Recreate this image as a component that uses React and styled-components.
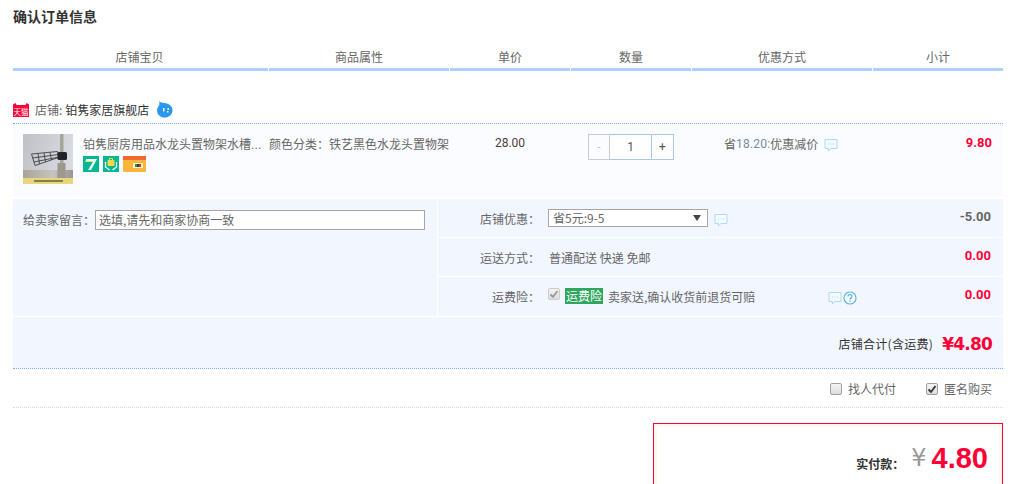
import React from 'react';
import styled, { createGlobalStyle } from 'styled-components';

const Global = createGlobalStyle`
  html, body { margin: 0; padding: 0; background: #fff; }
  body { font: 12px/16px "Noto Sans CJK SC", sans-serif; color: #666; }
  * { box-sizing: border-box; }
`;
const CJK = `"Noto Sans CJK SC", sans-serif`;
const LATIN = `Roboto, "Noto Sans CJK SC", sans-serif`;

const Page = styled.div`
  width: 1011px; height: 484px; overflow: hidden; padding: 7px 8px 0 13px;
  font-family: ${CJK};
`;
const Title = styled.h1`
  margin: 0; font-size: 14px; line-height: 18px; font-weight: 700; color: #333;
`;
const Head = styled.div`
  display: grid; grid-template-columns: 255px 180px 120px 120px 180px 130px; column-gap: 1px;
  margin-top: 15px;
`;
const HeadCell = styled.div`
  height: 31px; padding-top: 6px; line-height: 21px; text-align: center;
  color: #666; border-bottom: 3px solid #b0d0ff;
  padding-right: ${p => p.$shift || 0}px;
`;
const Shop = styled.div`
  display: flex; align-items: center; height: 53px; padding-top: 25px; color: #333;
  border-bottom: 1px dotted #78b0ff;
`;
const ShopLabel = styled.span` color: #666; margin: 0 3px 0 6px; `;
const ShopName = styled.span` color: #333; margin-right: 7px; `;
const Item = styled.div`
  display: grid; grid-template-columns: 255px 180px 120px 120px 180px 130px; column-gap: 1px;
  height: 73px; background: #fbfcff; padding-top: 10px;
`;
const Product = styled.div`
  display: flex; padding-left: 10px;
`;
const ProductInfo = styled.div`
  margin-left: 10px; width: 180px; padding-top: 1px;
`;
const ProductTitle = styled.div`
  white-space: nowrap; line-height: 18px; color: #666;
`;
const Dots = styled.span` font-family: "Liberation Sans", sans-serif; letter-spacing: .2px; `;
const Badges = styled.div` display: flex; gap: 4px; margin-top: 2px; `;
const Props = styled.div` white-space: nowrap; padding-top: 1px; line-height: 18px; color: #666; `;
const Price = styled.div`
  text-align: center; font-family: ${LATIN}; font-size: 12px; line-height: 18px; color: #4a4038;
`;
const Stepper = styled.div`
  display: flex; width: 86px; height: 26px; margin-left: 17px; background: #fff;
  border: 1px solid #a7c8e8;
`;
const StepBtn = styled.div`
  width: ${p => p.$wide ? 43 : 21}px; text-align: center; line-height: 24px; font-family: ${LATIN};
  color: ${p => p.$muted ? '#ccc' : '#555'};
  background: ${p => p.$muted ? '#fbfcff' : '#fff'};
  ${p => p.$muted && 'margin: -1px 0 -1px -1px; border: 1px solid #ccc; width: 22px; line-height: 24px;'}
  ${p => p.$wide && 'border-right: 1px solid #a7c8e8; flex: 1;'}
`;
const Promo = styled.div`
  display: flex; align-items: center; height: 18px; padding-left: 32px; color: #666; white-space: nowrap; margin-top: 1px;
`;
const PromoNum = styled.span` font-family: ${LATIN}; color: #7a8aa0; letter-spacing: .2px; `;
const Sub = styled.div`
  text-align: right; padding-right: 11px; font-family: ${LATIN}; font-weight: 700; font-size: 13px; color: #ff0036; line-height: 18px;
`;
const Extra = styled.div`
  display: grid; grid-template-columns: 424px 1fr; column-gap: 1px; margin-top: 2px;
`;
const Message = styled.div`
  background: #f2f6ff; padding: 11px 0 0 10px; display: flex; align-items: flex-start;
`;
const MessageLabel = styled.span` line-height: 20px; color: #666; `;
const MessageInput = styled.div`
  width: 330px; height: 20px; border: 1px solid #a6a6a6; background: #fff;
  padding-left: 3px; line-height: 18px; color: #666;
`;
const Rows = styled.div` display: flex; flex-direction: column; gap: 1px; `;
const Row = styled.div`
  display: grid; grid-template-columns: 102px 1fr 90px; height: ${p => p.$h}px; background: #f2f6ff; padding-top: 10px;
`;
const RowLabel = styled.div` text-align: right; line-height: 20px; color: #666; `;
const RowBody = styled.div`
  display: flex; align-items: flex-start; padding-left: 9px; line-height: 20px; color: #666; white-space: nowrap; min-width: 0;
`;
const RowValue = styled.div`
  text-align: right; padding-right: 12px; font-family: ${LATIN}; font-weight: 700; font-size: 13px; line-height: 16px;
  color: ${p => p.$red ? '#ff0036' : '#666'};
`;
const Select = styled.div`
  width: 160px; height: 18px; margin-left: -1px; border: 1px solid #a6a6a6; background: #fff; display: flex; align-items: center;
  justify-content: space-between; padding: 0 5px 0 4px; line-height: 16px;
`;
const Caret = styled.span`
  width: 0; height: 0; border: 4px solid transparent; border-top: 6px solid #444; border-bottom: 0; margin-right: 1px;
`;
const Check = styled.span`
  display: inline-flex; align-items: center; justify-content: center; flex: none;
  width: 12px; height: 12px; border: 1px solid ${p => p.$soft ? '#ccc' : '#a0a0a0'}; border-radius: 2px;
  background: linear-gradient(#f4f4f4, #dedede);
  color: ${p => p.$soft ? '#999' : '#333'};
  ${p => p.$inRow && 'margin: 1px 0 0 -1px;'}
`;
const Green = styled.span`
  flex: none; background: #2ea65d; color: #fff; padding-left: 1px; width: 38px; height: 16px; line-height: 16px; margin: 1px 5px 0 5px;
`;
const Total = styled.div`
  margin-top: 1px; height: 52px; background: #f2f6ff; border-bottom: 1px dotted #78b0ff;
  display: flex; justify-content: flex-end; align-items: center; padding: 2px 11px 0 0; color: #333;
`;
const TotalLabel = styled.span` letter-spacing: .3px; margin-right: 1px; `;
const TotalNum = styled.span`
  font-family: "DejaVu Sans", sans-serif; font-weight: 700; font-size: 17px; color: #ff0036; margin-left: 8px; letter-spacing: -.8px;
`;
const Options = styled.div`
  height: 39px; border-bottom: 1px dotted #d9d9d9; display: flex; justify-content: flex-end; align-items: center; gap: 30px; padding: 2px 11px 0 0; color: #666;
`;
const Option = styled.label` display: flex; align-items: center; gap: 6px; `;
const PayBox = styled.div`
  width: 350px; height: 90px; margin: 15px 0 0 auto; border: 1px solid #ff0036; box-shadow: inset 0 0 0 3px #fff6f0; background: #fff;
  padding: 20px 14px 0 0; display: flex; justify-content: flex-end; align-items: flex-start;
`;
const PayLabel = styled.span` font-weight: 700; color: #333; margin-top: 12px; `;
const Yen = styled.span` font-family: "DejaVu Sans", sans-serif; font-size: 24px; line-height: 28px; color: #999; margin: 0 5px 0 7px; `;
const PayNum = styled.span`
  font-family: "Liberation Sans", sans-serif; font-weight: 700; font-size: 29px; line-height: 28px; color: #ff0036;
`;
const IconRow = styled.span` display: flex; flex: none; gap: 1px; margin-left: ${p => p.$left ?? 6}px; margin-top: ${p => p.$top || 0}px; `;

const Bubble = () => (
  <svg width="14" height="14" viewBox="0 0 14 14">
    <path d="M1 1.500h12v9H7l-2.600 2.500V10.500H1z" fill="#f4faff" stroke="#a9dcf7" strokeWidth="1" />
    <path d="M4 6h1M6.500 6h1M9 6h1" stroke="#a9dcf7" strokeWidth="1" />
  </svg>
);
const Help = () => (
  <svg width="14" height="14" viewBox="0 0 14 14">
    <circle cx="7" cy="7" r="6" fill="#fff" stroke="#5fb4ec" strokeWidth="1.2" />
    <path d="M5 5.400C5 3 9 3 9 5.400 9 7 7 6.800 7 8.400" fill="none" stroke="#5fb4ec" strokeWidth="1.3" />
    <rect x="6.300" y="9.600" width="1.400" height="1.400" fill="#5fb4ec" />
  </svg>
);
const Tick = () => (
  <svg width="10" height="10" viewBox="0 0 10 10"><path d="M1.500 5.500L4 8l4.500-6" fill="none" stroke="currentColor" strokeWidth="1.800" /></svg>
);
const Tmall = () => (
  <svg width="16" height="14" viewBox="0 0 16 14" style={{ flex: 'none' }}>
    <path d="M0 1.500L2.500 0l1 2h9l1-2L16 1.500V14H0z" fill="#ff0036" />
    <text x="8" y="11.500" textAnchor="middle" fontSize="7.500" fill="#fff" fontFamily={CJK}>天猫</text>
  </svg>
);
const Wang = () => (
  <svg width="17" height="17" viewBox="0 0 17 17">
    <path d="M3 0c1.500 1.500 3 1.800 5.500 2 4 .3 8 3 8 7.200 0 4.200-3.500 7.300-7.800 7.300S1 13.400 1 9.200C1 7 2.600 5.600 3.200 4 3.600 2.700 3.400 1.300 3 0z" fill="#2a97f2" />
    <rect x="7" y="7" width="1.500" height="3.500" fill="#fff" />
    <rect x="11.500" y="7" width="1.500" height="1.800" fill="#fff" />
    <rect x="11" y="10" width="1.500" height="1.500" fill="#fff" />
  </svg>
);
const Photo = () => (
  <svg width="50" height="50" viewBox="0 0 50 50" style={{ flex: 'none' }}>
    <defs>
      <linearGradient id="w" x1="0" x2="1" y1="0" y2="0.3"><stop offset="0" stopColor="#bfc1c5" /><stop offset="1" stopColor="#d8dae2" /></linearGradient>
      <linearGradient id="s" x1="0" x2="1" y1="0" y2="0"><stop offset="0" stopColor="#a8a49a" /><stop offset=".6" stopColor="#c6c4be" /><stop offset="1" stopColor="#989690" /></linearGradient>
    </defs>
    <rect width="50" height="50" fill="url(#w)" />
    <rect y="36" width="50" height="8" fill="url(#s)" />
    <rect x="37" y="0" width="3.500" height="44" fill="#a8a49a" />
    <rect x="34.500" y="29" width="8" height="15" fill="#9c988e" />
    <rect y="44" width="50" height="6" fill="#e8d67c" />
    <rect x="11" y="46" width="29" height="2" fill="#8a7d4c" />
    <g fill="none" stroke="#3e4146" strokeWidth=".9">
      <path d="M8.500 20l26-2.500 1 6L12 31.500z" />
      <path d="M9.500 24l26-3.500M11 28l25-5M15 19.500l1.500 10.500M21 19l1.500 9M27 18.500l1.500 7.500" />
    </g>
    <rect x="34.500" y="18" width="9.500" height="8" rx="1.500" fill="#232428" />
  </svg>
);
const Seven = () => (
  <svg width="16" height="16" viewBox="0 0 16 16"><rect width="16" height="16" fill="#00b894" /><path d="M3 3h11L8 14H5.200l4.800-8.400H3z" fill="#fff" /><path d="M2 5.200h7" stroke="#e6f560" strokeWidth="1" /></svg>
);
const Bag = () => (
  <svg width="16" height="16" viewBox="0 0 16 16"><rect width="16" height="16" fill="#00b894" /><rect x="4.500" y="4" width="7" height="6" rx="1" fill="#f6d84a" /><path d="M6.500 4V2.500h3V4" fill="none" stroke="#f6d84a" /><path d="M2.500 6v5l4 3M13.500 6v5l-4 3" fill="none" stroke="#fff" strokeWidth="1.300" /></svg>
);
const Card = () => (
  <svg width="23" height="16" viewBox="0 0 23 16"><rect width="23" height="16" rx="1.500" fill="#fbb43c" /><rect width="23" height="4" fill="#ef6a2c" /><rect x="10" y="7" width="10" height="5" fill="#fff2c2" /><rect x="12" y="8" width="6" height="3" fill="#1a3a7a" /><rect x="12" y="8" width="2" height="3" fill="#18a058" /><rect x="16" y="8" width="2" height="3" fill="#d8342c" /></svg>
);

export default function App() {
  return (
    <Page>
      <Global />
      <Title>确认订单信息</Title>
      <Head>
        <HeadCell $shift={2}>店铺宝贝</HeadCell>
        {['商品属性', '单价', '数量', '优惠方式', '小计'].map(t => <HeadCell key={t}>{t}</HeadCell>)}
      </Head>
      <Shop>
        <Tmall />
        <ShopLabel>店铺:</ShopLabel>
        <ShopName>铂隽家居旗舰店</ShopName>
        <Wang />
      </Shop>
      <Item>
        <Product>
          <Photo />
          <ProductInfo>
            <ProductTitle>铂隽厨房用品水龙头置物架水槽<Dots>...</Dots></ProductTitle>
            <Badges><Seven /><Bag /><Card /></Badges>
          </ProductInfo>
        </Product>
        <Props>颜色分类：铁艺黑色水龙头置物架</Props>
        <Price>28.00</Price>
        <div>
          <Stepper>
            <StepBtn $muted>-</StepBtn>
            <StepBtn $wide>1</StepBtn>
            <StepBtn>+</StepBtn>
          </Stepper>
        </div>
        <Promo>省<PromoNum>18.20:</PromoNum>优惠减价<IconRow $top={1}><Bubble /></IconRow></Promo>
        <Sub>9.80</Sub>
      </Item>
      <Extra>
        <Message>
          <MessageLabel>给卖家留言：</MessageLabel>
          <MessageInput>选填,请先和商家协商一致</MessageInput>
        </Message>
        <Rows>
          <Row $h={38}>
            <RowLabel>店铺优惠：</RowLabel>
            <RowBody><Select>省5元:9-5<Caret /></Select><IconRow $top={4}><Bubble /></IconRow></RowBody>
            <RowValue>-5.00</RowValue>
          </Row>
          <Row $h={38}>
            <RowLabel>运送方式：</RowLabel>
            <RowBody>普通配送 快递 免邮</RowBody>
            <RowValue $red>0.00</RowValue>
          </Row>
          <Row $h={39}>
            <RowLabel>运费险：</RowLabel>
            <RowBody>
              <Check $soft $inRow><Tick /></Check>
              <Green>运费险</Green>卖家送,确认收货前退货可赔
              <IconRow $top={4} $left={73}><Bubble /><Help /></IconRow>
            </RowBody>
            <RowValue $red>0.00</RowValue>
          </Row>
        </Rows>
      </Extra>
      <Total><TotalLabel>店铺合计(含运费)</TotalLabel><TotalNum>¥4.80</TotalNum></Total>
      <Options>
        <Option><Check />找人代付</Option>
        <Option><Check><Tick /></Check>匿名购买</Option>
      </Options>
      <PayBox>
        <PayLabel>实付款：</PayLabel>
        <Yen>¥</Yen>
        <PayNum>4.80</PayNum>
      </PayBox>
    </Page>
  );
}
